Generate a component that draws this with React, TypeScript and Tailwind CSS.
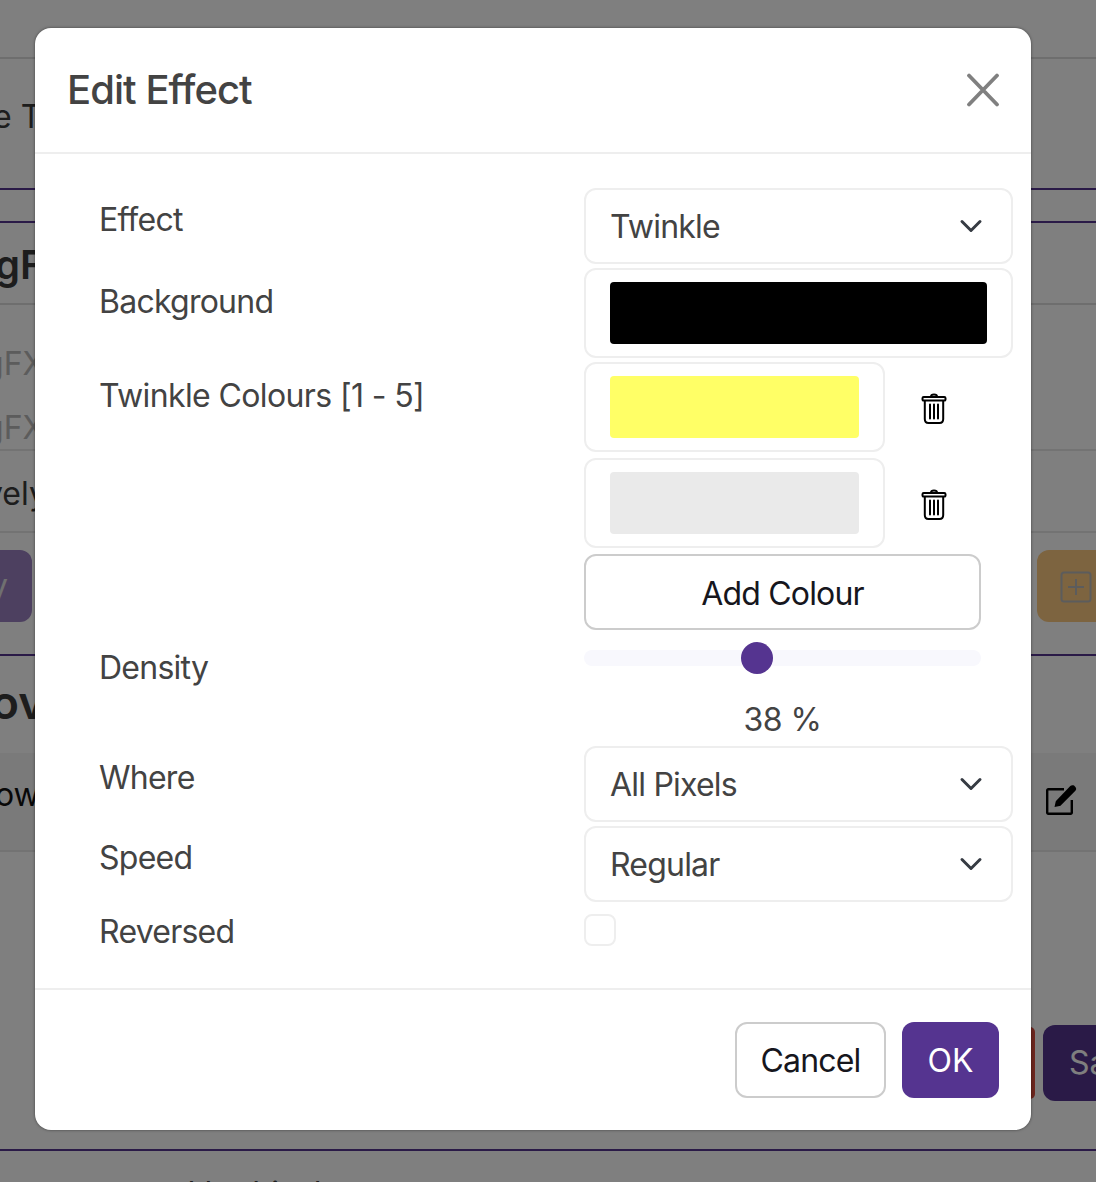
import React from "react";
import { ChevronDown } from "lucide-react";

function Trash() {
  return (
    <svg width="26" height="32" viewBox="0 0 26 32" fill="none" stroke="#000" strokeWidth="2" strokeLinejoin="round" strokeLinecap="round">
      <path d="M10 3.500C10 2.300 10.800 1.500 13 1.500s3 .8 3 2" />
      <rect x="1.500" y="4" width="23" height="3.600" rx="1.200" />
      <path d="M3.800 8v18C3.800 28.500 5.300 30 7.500 30h11c2.200 0 3.700-1.500 3.700-4V8" />
      <path d="M9 11.500v14M13 11.500v14M17 11.500v14" />
    </svg>
  );
}

function Select({ value }: { value: string }) {
  return (
    <div className="flex h-[76px] w-[429px] items-center justify-between rounded-[12px] border-2 border-[#eeeeee] bg-white pl-[24px] pr-[22px] text-[#434343]">
      <span className="pt-[2px] text-[32px] leading-none tracking-[-0.8px]">{value}</span>
      <ChevronDown size={36} strokeWidth={2} className="text-[#363b43]" />
    </div>
  );
}

function Swatch({ color, wide }: { color: string; wide?: boolean }) {
  return (
    <div className={`flex h-[90px] items-center rounded-[12px] border-2 border-[#eeeeee] bg-white px-[24px] ${wide ? "w-[429px]" : "w-[301px]"}`}>
      <div className="h-[62px] w-full rounded-[4px]" style={{ backgroundColor: color }} />
    </div>
  );
}

function Label({ children, className }: { children: React.ReactNode; className: string }) {
  return <div className={`text-[32px] leading-[40px] text-[#434343] ${className}`}>{children}</div>;
}

export default function App() {
  return (
    <div className="relative h-[1182px] w-[1096px] overflow-hidden bg-white font-['Inter','Liberation_Sans',sans-serif]">
      <div className="flex h-full flex-col text-[32px] text-[#3a3a3a]">
        <div className="h-[59px] shrink-0 border-b-2 border-[#dcdcdc]" />
        <div className="h-[131px] shrink-0 border-b-2 border-[#54358f] pt-[38px] leading-[40px] whitespace-nowrap">
          <span className="-ml-[7px] inline-block">e T</span>
        </div>
        <div className="h-[33px] shrink-0 border-b-2 border-[#54358f]" />
        <div className="h-[82px] shrink-0 border-b-2 border-[#dcdcdc] pt-[18px] text-[40px] leading-[48px] font-semibold">
          <span className="-ml-[5px] inline-block">gF</span>
        </div>
        <div className="h-[146px] shrink-0 border-b-2 border-[#e6e6e6] pt-[27px] leading-[64px] text-[#b8b8b8]">
          <div className="-ml-[16px]">gFX</div>
          <div className="-ml-[16px]">gFX</div>
        </div>
        <div className="h-[82px] shrink-0 border-b-2 border-[#e6e6e6] pt-[23px] leading-[40px]">
          <span className="-ml-[15px] inline-block">vely</span>
        </div>
        <div className="flex h-[123px] shrink-0 justify-between border-b-2 border-[#54358f] pt-[17px]">
          <div className="flex h-[72px] w-[32px] items-center justify-end rounded-r-[12px] bg-[#9a80c0] pr-[24px] text-[#e0e0e0]">y</div>
          <div className="flex h-[72px] w-[59px] items-center rounded-l-[12px] bg-[#fbc880] pl-[23px]">
            <svg width="32" height="32" viewBox="0 0 32 32" fill="none" stroke="#b8b8b8" strokeWidth="2" className="mt-[1px]">
              <rect x="1.500" y="1.500" width="29" height="29" rx="2.500" />
              <path d="M16 8v16M8 16h16" />
            </svg>
          </div>
        </div>
        <div className="h-[97px] shrink-0 pt-[20px] text-[46px] leading-[52px] font-semibold">
          <span className="-ml-[9px] inline-block">ov</span>
        </div>
        <div className="flex h-[99px] shrink-0 items-center justify-between border-b-2 border-[#e6e6e6] bg-[#f4f4f4] pr-[17px]">
          <span className="-ml-[5px] -mt-[14px] inline-block text-[#111]">ow</span>
          <svg width="36" height="36" viewBox="0 0 24 24" fill="#000" className="mt-[-3px]">
            <path d="M20.700 2.400l.9.9c.7.7.7 1.800 0 2.500l-9.800 9.800c-.2.2-.5.4-.8.4l-3.300.7.700-3.400c.1-.3.200-.6.400-.8l9.400-9.800c.6-.7 1.800-.7 2.500-.3z" />
            <path d="M3.500 4h10.500v1.600H3.600v14.800h14.800V12H20v8.500c0 .8-.7 1.500-1.500 1.500h-15C2.700 22 2 21.300 2 20.500v-15C2 4.700 2.700 4 3.500 4z" />
          </svg>
        </div>
        <div className="h-[297px] shrink-0" />
      </div>

      <div className="absolute left-0 top-[1149px] h-[2px] w-full bg-[#54358f]" />
      <div className="absolute left-[6px] top-[1174px] whitespace-pre text-[32px] leading-[40px] text-[#3a3a3a]">to create a d ltt this  bt tt</div>
      <div className="absolute left-[1030px] top-[1027px] h-[72px] w-[5px] rounded-r-[12px] bg-[#d84a3c]" />
      <div className="absolute left-[1043px] top-[1025px] flex h-[76px] w-[60px] items-center rounded-l-[12px] bg-[#54358f] pl-[26px] text-[32px] text-white">Sa</div>

      <div className="absolute inset-0 bg-[#000000]/50" />

      <div className="absolute left-[35px] top-[28px] flex h-[1102px] w-[996px] flex-col rounded-[16px] bg-white shadow-[0_0_3px_rgba(0,0,0,0.5)]">
        <div className="flex h-[126px] shrink-0 items-center justify-between border-b-2 border-[#eeeeee] pl-[33px] pr-[31px]">
          <div className="-ml-[1px] text-[40px] leading-[48px] font-medium tracking-[-0.95px] text-[#434343]">Edit Effect</div>
          <svg width="34" height="34" viewBox="0 0 34 34" stroke="#808080" strokeWidth="3.800" strokeLinecap="round">
            <path d="M3 2.500l28 29M31 2.500l-28 29" />
          </svg>
        </div>

        <div className="flex flex-1 pl-[64px] pt-[34px]">
          <div className="w-[485px] shrink-0">
            <Label className="mt-[12px] tracking-[-0.75px]">Effect</Label>
            <Label className="mt-[42px] tracking-[-0.75px]">Background</Label>
            <Label className="mt-[54px] tracking-[-0.62px]">Twinkle Colours [1 - 5]</Label>
            <Label className="mt-[232px] tracking-[-0.75px]">Density</Label>
            <Label className="mt-[70px] tracking-[-0.75px]">Where</Label>
            <Label className="mt-[40px] tracking-[-0.75px]">Speed</Label>
            <Label className="mt-[34px] tracking-[-0.75px]">Reversed</Label>
          </div>

          <div className="flex flex-col">
            <Select value="Twinkle" />
            <div className="mt-[4px]"><Swatch color="#000000" wide /></div>
            <div className="mt-[4px] flex items-center">
              <Swatch color="#ffff66" />
              <div className="ml-[36px] mt-[4px]"><Trash /></div>
            </div>
            <div className="mt-[6px] flex items-center">
              <Swatch color="#eaeaea" />
              <div className="ml-[36px] mt-[4px]"><Trash /></div>
            </div>
            <button className="mt-[6px] h-[76px] w-[397px] rounded-[12px] border-2 border-[#cccccc] bg-white pt-[3px] text-[32px] tracking-[-0.8px] text-[#16161d]">Add Colour</button>
            <div className="relative mt-[20px] h-[16px] w-[397px] rounded-full bg-[#f8f8fd]">
              <div className="absolute left-[157px] top-[-8px] h-[32px] w-[32px] rounded-full bg-[#553490]" />
            </div>
            <div className="mt-[34px] w-[397px] text-center text-[32px] leading-[40px] tracking-[-0.5px] text-[#434343]">38 %</div>
            <div className="mt-[6px]"><Select value="All Pixels" /></div>
            <div className="mt-[4px]"><Select value="Regular" /></div>
            <div className="mt-[12px] h-[32px] w-[32px] rounded-[8px] border-2 border-[#eeeeee] bg-white" />
          </div>
        </div>

        <div className="flex h-[142px] shrink-0 items-start justify-end gap-[16px] border-t-2 border-[#eeeeee] pr-[32px] pt-[32px]">
          <button className="h-[76px] w-[151px] rounded-[12px] border-2 border-[#cccccc] bg-white pt-[2px] text-[32px] tracking-[-0.8px] text-[#16161d]">Cancel</button>
          <button className="h-[76px] w-[97px] rounded-[12px] bg-[#553490] pt-[2px] text-[32px] text-white">OK</button>
        </div>
      </div>
    </div>
  );
}
